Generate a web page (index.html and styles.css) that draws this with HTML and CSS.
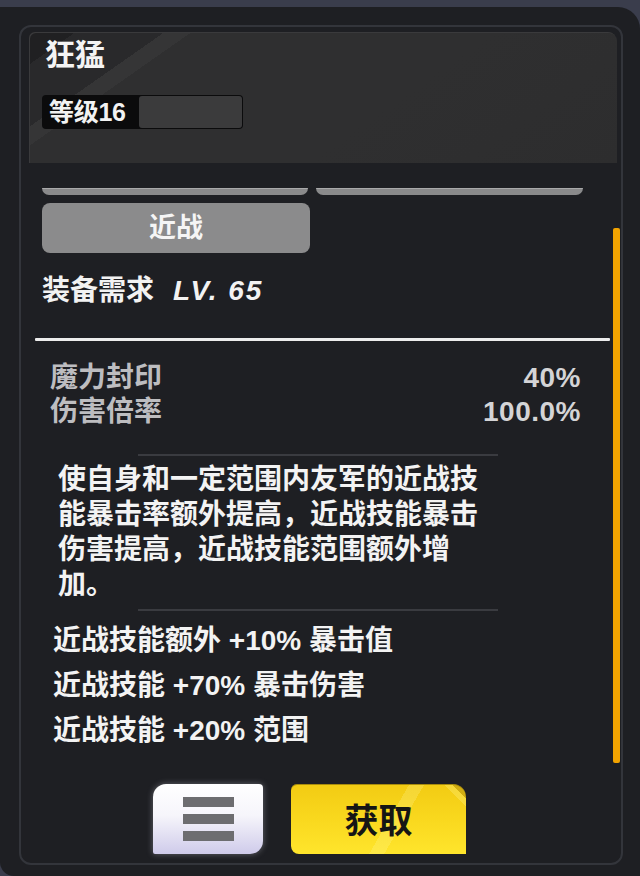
FILE: index.html
```html
<!DOCTYPE html>
<html lang="zh">
<head>
<meta charset="utf-8">
<title>狂猛</title>
<link rel="stylesheet" href="styles.css">
</head>
<body>
<div class="panel">
  <div class="frame">
    <div class="header">
      <div class="title">狂猛</div>
      <div class="level">
        <span class="level-text">等级16</span>
        <span class="level-fill"></span>
      </div>
    </div>
    <div class="content">
      <div class="tabs">
        <span class="tab"></span>
        <span class="tab"></span>
      </div>
      <div class="melee">近战</div>
      <div class="req">装备需求<span class="lv">LV. 65</span></div>
      <div class="rule"></div>
      <div class="stats">
        <div class="stat"><span class="label">魔力封印</span><span class="value">40%</span></div>
        <div class="stat"><span class="label">伤害倍率</span><span class="value">100.0%</span></div>
      </div>
      <div class="sep"></div>
      <p class="desc">使自身和一定范围内友军的近战技能暴击率额外提高，近战技能暴击伤害提高，近战技能范围额外增加。</p>
      <div class="sep"></div>
      <ul class="effects">
        <li>近战技能额外 +10% 暴击值</li>
        <li>近战技能 +70% 暴击伤害</li>
        <li>近战技能 +20% 范围</li>
      </ul>
      <div class="actions">
        <button class="btn-menu" type="button" aria-label="菜单">
          <span class="bar"></span><span class="bar"></span><span class="bar"></span>
        </button>
        <button class="btn-get" type="button">获取</button>
      </div>
    </div>
    <div class="scrollbar"></div>
  </div>
</div>
</body>
</html>
```

FILE: styles.css
```css
* { box-sizing: border-box; }
html, body { margin: 0; padding: 0; }
body {
  width: 640px;
  height: 876px;
  overflow: hidden;
  background: #3a3d4c;
  font-family: "Liberation Sans", "Noto Sans CJK SC", sans-serif;
  color: #f1f1f1;
}
.panel {
  margin-top: 7px;
  height: 869px;
  background: #1e1f23;
  border-top-right-radius: 22px;
  border-bottom-left-radius: 14px;
  padding: 18px 17px 11px 19px;
}
.frame {
  position: relative;
  height: 100%;
  border: 2px solid #33353b;
  border-radius: 12px;
  padding: 5px 4px 0 8px;
}
.header {
  height: 131px;
  border-radius: 6px 9px 0 0;
  background: linear-gradient(145deg, #202022 0 6%, #29292b 6% 17.5%, #353536 17.5% 21%, #2f2f30 21% 60%, #2d2d2e 100%);
  padding: 5px 0 0 16px;
  box-shadow: inset 1px 1px 0 #3a3a3c;
}
.title {
  font-size: 30px;
  line-height: 36px;
  font-weight: 700;
  color: #f4f4f4;
}
.level {
  margin-top: 22px;
  margin-left: -3px;
  width: 201px;
  height: 34px;
  background: #0b0b0c;
  border-radius: 4px;
  display: flex;
  align-items: center;
  padding: 1px 1px 1px 7px;
}
.level-text {
  font-size: 25px;
  font-weight: 700;
  line-height: 30px;
  color: #f2f2f2;
  width: 90px;
  letter-spacing: -0.3px;
}
.level-fill {
  flex: 1;
  align-self: stretch;
  background: #3b3b3c;
  border-radius: 3px;
}
.content {
  margin-left: 6px;
  width: 575px;
}
.tabs {
  margin-top: 25px;
  margin-left: 7px;
  display: flex;
  gap: 8px;
}
.tab {
  width: 266px;
  height: 7px;
  background: #8a8a8b;
  border-top: 1px solid #a9a9aa;
  border-radius: 0 0 10px 10px;
}
.tab + .tab { width: 267px; }
.melee {
  margin-top: 8px;
  margin-left: 7px;
  width: 268px;
  height: 50px;
  background: #8b8b8c;
  border-radius: 8px;
  text-align: center;
  font-size: 27px;
  line-height: 50px;
  font-weight: 700;
  color: #f5f5f5;
}
.req {
  margin-top: 20px;
  margin-left: 7px;
  font-size: 28px;
  line-height: 36px;
  font-weight: 700;
  color: #f2f2f2;
}
.lv {
  margin-left: 19px;
  font-style: italic;
  font-weight: 700;
  letter-spacing: 2px;
}
.rule {
  margin-top: 29px;
  height: 3px;
  background: #ececec;
  border-radius: 1px;
}
.stats {
  margin-top: 20px;
  padding: 0 30px 0 15px;
}
.stat {
  display: flex;
  justify-content: space-between;
  font-size: 28px;
  line-height: 34px;
}
.label {
  color: #bdbdc0;
  font-weight: 700;
}
.value {
  color: #d4d4d6;
  font-weight: 700;
  letter-spacing: 0.5px;
  margin-right: -1px;
}
.sep {
  margin-top: 25px;
  margin-left: 103px;
  width: 360px;
  height: 2px;
  background: #3a3b40;
}
.desc {
  margin: 6px 0 0 23px;
  width: 440px;
  font-size: 28px;
  line-height: 35px;
  font-weight: 700;
  color: #f3f3f3;
}
.desc + .sep { margin-top: 7px; }
.effects {
  list-style: none;
  margin: 7px 0 0 18px;
  padding: 0;
  font-size: 28px;
  line-height: 45px;
  font-weight: 700;
  color: #f3f3f3;
}
.actions {
  margin-top: 31px;
  margin-left: 118px;
  display: flex;
  gap: 28px;
}
.btn-menu {
  width: 110px;
  height: 70px;
  border: 0;
  padding: 0;
  border-radius: 13px 4px 13px 2px;
  background: linear-gradient(to bottom, #ffffff 0%, #f6f5fb 45%, #cfcbea 100%);
  box-shadow: 0 0 6px rgba(230, 228, 245, 0.35);
  display: flex;
  flex-direction: column;
  align-items: center;
  justify-content: center;
  gap: 7px;
}
.bar {
  display: block;
  width: 51px;
  height: 10px;
  background: #6d6d70;
}
.btn-get {
  width: 175px;
  height: 70px;
  border: 0;
  padding: 0;
  border-radius: 6px 13px 0 8px;
  background:
    linear-gradient(225deg, #d2ae12 0 6%, rgba(255, 244, 140, 0.3) 6% 9%, transparent 9%),
    linear-gradient(120deg, transparent 0 55%, rgba(255, 250, 170, 0.22) 55% 62%, transparent 62%),
    linear-gradient(to bottom, #f2cb13 0%, #f9d81e 50%, #ffe52c 100%);
  box-shadow: inset 0 1px 0 #a98c0c;
  font-family: "Noto Sans CJK SC", sans-serif;
  font-size: 34px;
  font-weight: 700;
  line-height: 70px;
  color: #151515;
  text-align: center;
}
.scrollbar {
  position: absolute;
  left: 592px;
  top: 201px;
  width: 7px;
  height: 535px;
  background: #f2a300;
  border-radius: 2px;
}
```
